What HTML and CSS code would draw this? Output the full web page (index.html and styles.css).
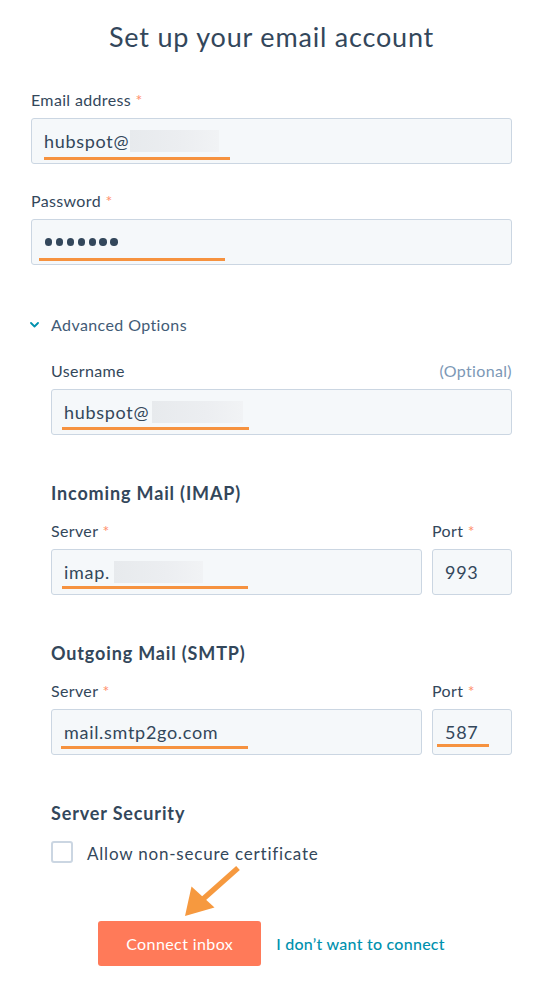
FILE: index.html
```html
<!DOCTYPE html>
<html lang="en">
<head>
<meta charset="utf-8">
<title>Set up your email account</title>
<link rel="stylesheet" href="styles.css">
</head>
<body>
<main class="page">
  <h1 class="title">Set up your email account</h1>

  <div class="field field-email">
    <div class="label">Email address <span class="req">*</span></div>
    <div class="input">hubspot@<span class="redact redact-email"></span><span class="mark mark-email"></span></div>
  </div>

  <div class="field field-password">
    <div class="label">Password <span class="req">*</span></div>
    <div class="input">
      <span class="dots"><i></i><i></i><i></i><i></i><i></i><i></i><i></i></span>
      <span class="mark mark-password"></span>
    </div>
  </div>

  <div class="adv-toggle">
    <svg class="chev" width="9" height="6" viewBox="0 0 9 6"><path d="M1 1 L4.5 4.5 L8 1" fill="none" stroke="#0091ae" stroke-width="1.8" stroke-linecap="round" stroke-linejoin="round"/></svg>
    <span>Advanced Options</span>
  </div>

  <div class="adv">
    <div class="field field-username">
      <div class="label label-row"><span>Username</span><span class="opt">(Optional)</span></div>
      <div class="input">hubspot@<span class="redact redact-user"></span><span class="mark mark-user"></span></div>
    </div>

    <h2 class="sec">Incoming Mail (IMAP)</h2>
    <div class="pair">
      <div class="field grow">
        <div class="label">Server <span class="req">*</span></div>
        <div class="input">imap.<span class="redact redact-imap"></span><span class="mark mark-imap"></span></div>
      </div>
      <div class="field port">
        <div class="label">Port <span class="req">*</span></div>
        <div class="input">993</div>
      </div>
    </div>

    <h2 class="sec">Outgoing Mail (SMTP)</h2>
    <div class="pair">
      <div class="field grow">
        <div class="label">Server <span class="req">*</span></div>
        <div class="input">mail.smtp2go.com<span class="mark mark-smtp"></span></div>
      </div>
      <div class="field port">
        <div class="label">Port <span class="req">*</span></div>
        <div class="input">587<span class="mark mark-port"></span></div>
      </div>
    </div>

    <h2 class="sec">Server Security</h2>
    <label class="check"><span class="box"></span><span class="check-text">Allow non-secure certificate</span></label>
  </div>

  <div class="actions">
    <button class="btn" type="button">Connect inbox</button>
    <a class="link" href="#">I don’t want to connect</a>
  </div>

  <svg class="arrow" width="70" height="66" viewBox="0 0 70 66">
    <line x1="63" y1="8" x2="27" y2="40" stroke="#f6993f" stroke-width="5.5"/>
    <polygon points="10,56 16.5,26.5 39.5,47.5" fill="#f6993f"/>
  </svg>
</main>
</body>
</html>
```
FILE: styles.css
```css
* { box-sizing: border-box; }
html, body { margin: 0; padding: 0; background: #ffffff; }
body {
  font-family: Lato, "Noto Sans", "Liberation Sans", sans-serif;
  color: #33475b;
}
.page {
  position: relative;
  width: 548px;
  padding: 21px 36px 0 31px;
}
.title {
  margin: 0 0 37px;
  font-size: 27px;
  line-height: 32px;
  font-weight: 400;
  letter-spacing: 0.8px;
  text-align: center;
  color: #33475b;
}
.label {
  font-size: 16px;
  line-height: 20px;
  letter-spacing: 0.35px;
  margin-bottom: 8px;
  color: #33475b;
}
.label-row { display: flex; justify-content: space-between; }
.opt { color: #7c98b6; }
.req { color: #ff8f6b; }
.input {
  position: relative;
  display: flex;
  align-items: center;
  height: 46px;
  padding: 0 12px;
  background: #f5f8fa;
  border: 1px solid #cbd6e2;
  border-radius: 3px;
  font-size: 18px;
  line-height: 22px;
  letter-spacing: 0.7px;
  color: #33475b;
}
.field-password { margin-top: 27px; }
.dots { display: flex; gap: 3.5px; margin-left: 1px; }
.dots i {
  display: block;
  width: 7.4px;
  height: 7.4px;
  border-radius: 50%;
  background: #33475b;
}
.redact {
  display: inline-block;
  height: 22px;
  background: linear-gradient(90deg, #e7eaed 0%, #eceef1 60%, #f1f3f5 100%);
}
.redact-email { width: 89px; margin-left: 1px; }
.redact-user { width: 91px; margin-left: 3px; }
.redact-imap { width: 89px; margin-left: 4px; }
.mark {
  position: absolute;
  height: 3px;
  background: #f6923f;
}
.mark-email { left: 12px; top: 38px; width: 186px; }
.mark-password { left: 7px; top: 38px; width: 186px; }
.mark-user { left: 10px; top: 37px; width: 187px; }
.mark-imap { left: 10px; top: 36px; width: 186px; }
.mark-smtp { left: 9px; top: 36px; width: 187px; }
.mark-port { left: 4px; top: 34px; width: 52px; }

.adv-toggle {
  display: flex;
  align-items: center;
  gap: 12px;
  margin-top: 50px;
  font-size: 16px;
  line-height: 20px;
  letter-spacing: 0.4px;
  color: #425b76;
}
.chev { display: block; margin-left: -1px; }
.adv { padding-left: 20px; }
.field-username { margin-top: 26px; }
.sec {
  margin: 47px 0 17px;
  font-size: 18px;
  line-height: 22px;
  font-weight: 700;
  letter-spacing: 0.85px;
  color: #33475b;
}
.pair { display: flex; gap: 10px; }
.grow { flex: 1; }
.port { width: 80px; }
.check {
  display: flex;
  align-items: center;
  gap: 14px;
  height: 22px;
  font-size: 17px;
  letter-spacing: 0.8px;
  color: #33475b;
}
.check-text { padding-top: 3px; line-height: 19px; }
.box {
  width: 22px;
  height: 22px;
  border: 2px solid #cbd6e2;
  border-radius: 3px;
  background: #fff;
  flex: none;
}
.actions {
  display: flex;
  align-items: center;
  justify-content: center;
  gap: 15px;
  margin-top: 58px;
}
.btn {
  width: 163px;
  height: 45px;
  border: 0;
  border-radius: 3px;
  background: #ff7a59;
  color: #ffffff;
  font-family: inherit;
  font-size: 16px;
  letter-spacing: 0.4px;
}
.link {
  color: #0091ae;
  font-size: 16px;
  font-weight: 500;
  letter-spacing: 0.25px;
  text-decoration: none;
}
.arrow {
  position: absolute;
  left: 175px;
  top: 860px;
}
```
